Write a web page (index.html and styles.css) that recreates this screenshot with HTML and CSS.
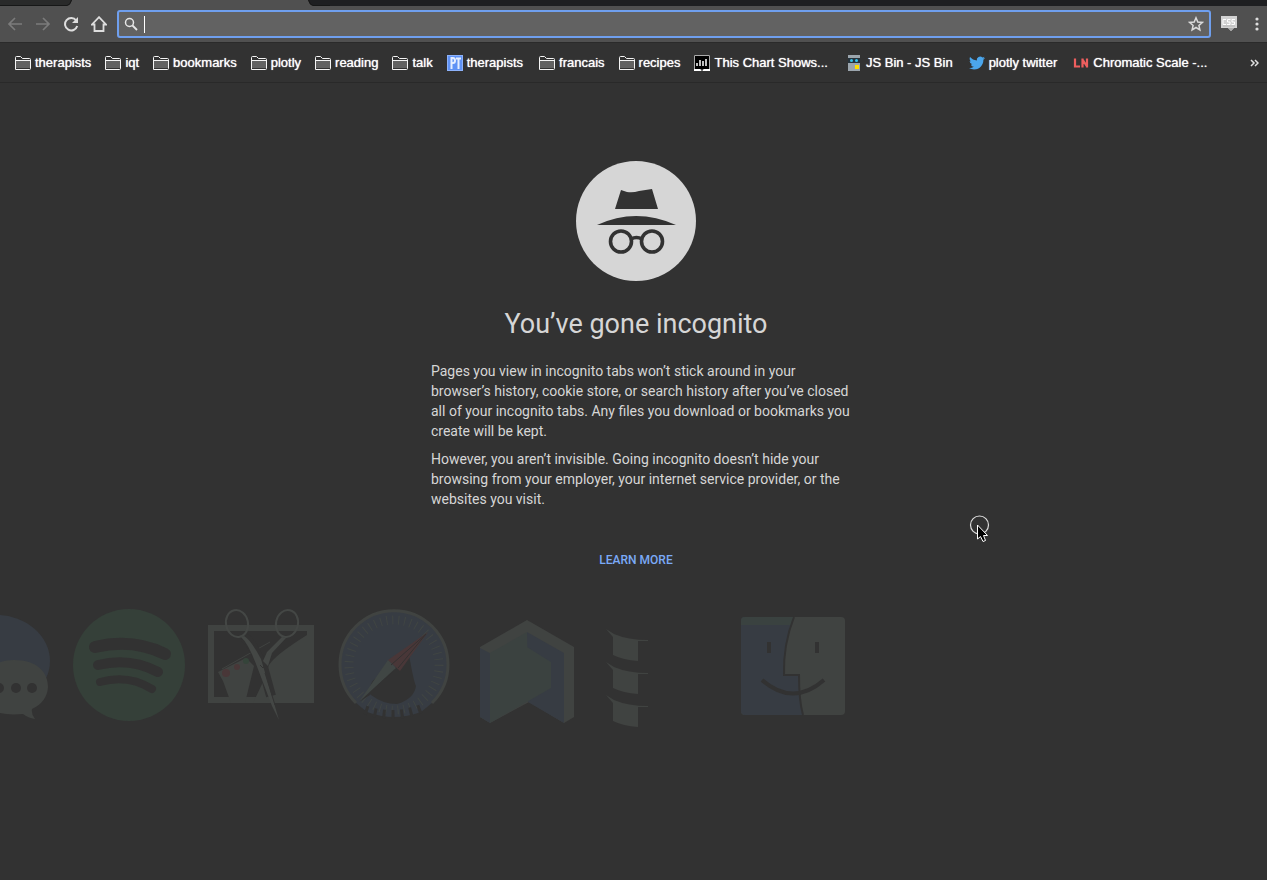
FILE: index.html
```html
<!DOCTYPE html>
<html lang="en">
<head>
<meta charset="utf-8">
<title>New Incognito Tab</title>
<link rel="stylesheet" href="styles.css">
</head>
<body>
<svg class="defs" width="0" height="0" aria-hidden="true">
  <symbol id="folder" viewBox="0 0 16 14"><path d="M.5 13.500V1.500Q.5.500 1.500.500H5.500L7.500 2.500H14.500Q15.500 2.500 15.500 3.500V12.500Q15.500 13.500 14.500 13.500Z" fill="#323232" stroke="#f4f4f4"/><path d="M1 5H15V12H1Z" fill="#626262"/><path d="M1 4.500H15.500" stroke="#f4f4f4"/></symbol>
</svg>

<div class="tabstrip">
  <svg width="330" height="6" viewBox="0 0 330 6" aria-hidden="true">
    <path d="M0 0H72L70 4Q69 5 67 5H0Z" fill="#292a2a"/>
    <path d="M0 5.500H67Q70 5.500 72 0H308Q310 5.500 313 5.500V6H0Z" fill="#505050"/>
    <path d="M0 5.500H67Q70 5.500 71.500 0M308.500 0Q310 5.500 313 5.500H330" fill="none" stroke="#161717"/>
  </svg>
</div>

<header class="toolbar">
  <button class="tool" type="button" aria-label="Back" disabled><svg width="16" height="16" viewBox="0 0 16 16"><path d="M15 8H2M8 2L2 8L8 14" fill="none" stroke="#7b7b7b" stroke-width="1.700"/></svg></button>
  <button class="tool" type="button" aria-label="Forward" disabled><svg width="16" height="16" viewBox="0 0 16 16"><path d="M1 8H14M8 2L14 8L8 14" fill="none" stroke="#7b7b7b" stroke-width="1.700"/></svg></button>
  <button class="tool" type="button" aria-label="Reload"><svg width="16" height="16" viewBox="0 0 16 16"><path d="M13.200 4.500A6.200 6.200 0 1 0 14.200 10" fill="none" stroke="#dedede" stroke-width="2"/><path d="M15 1V7H9Z" fill="#dedede"/></svg></button>
  <button class="tool" type="button" aria-label="Home"><svg width="16" height="16" viewBox="0 0 16 16"><path d="M8 1.200L15 8.500H12.500V15H3.500V8.500H1Z" fill="none" stroke="#dedede" stroke-width="1.800"/></svg></button>
  <div class="omnibox">
    <svg width="14" height="14" viewBox="0 0 14 14" aria-hidden="true"><circle cx="5.500" cy="5.500" r="4" fill="none" stroke="#e6e6e6" stroke-width="1.500"/><path d="M8.500 8.500L13 13" stroke="#e6e6e6" stroke-width="1.800"/></svg>
    <span class="caret"></span>
    <input class="address" type="text" aria-label="Search or enter address">
    <button class="star" type="button" aria-label="Bookmark this page"><svg width="16" height="16" viewBox="0 0 16 16"><path d="M8 1.800L9.800 6L14.300 6.400L10.900 9.400L11.900 13.900L8 11.500L4.100 13.900L5.100 9.400L1.700 6.400L6.200 6Z" fill="none" stroke="#dadada" stroke-width="1.500"/></svg></button>
  </div>
  <button class="ext" type="button" aria-label="CSS extension"><svg width="16" height="16" viewBox="0 0 16 16"><path d="M0 0H16V12H13L10 15L7 12H0Z" fill="#d2d2d2"/><path d="M7 12L10 15L13 12Z" fill="#ababab"/><path d="M5 3.500H2V8.500H5M9.500 3.500H6.500V6H9V8.500H6M14 3.500H11V6H13.500V8.500H10.500" fill="none" stroke="#fff"/><path d="M2 10H14" stroke="#b4b4b4"/></svg></button>
  <button class="menu" type="button" aria-label="Menu"><svg width="4" height="14" viewBox="0 0 4 14"><circle cx="2" cy="2" r="1.600" fill="#dedede"/><circle cx="2" cy="7" r="1.600" fill="#dedede"/><circle cx="2" cy="12" r="1.600" fill="#dedede"/></svg></button>
</header>

<nav class="bookmarks" aria-label="Bookmarks">
  <a class="bm" href="#"><svg class="fold"><use href="#folder"/></svg>therapists</a>
  <a class="bm" href="#"><svg class="fold"><use href="#folder"/></svg>iqt</a>
  <a class="bm" href="#"><svg class="fold"><use href="#folder"/></svg>bookmarks</a>
  <a class="bm" href="#"><svg class="fold"><use href="#folder"/></svg>plotly</a>
  <a class="bm" href="#"><svg class="fold"><use href="#folder"/></svg>reading</a>
  <a class="bm" href="#"><svg class="fold"><use href="#folder"/></svg>talk</a>
  <a class="bm site" href="#"><svg width="16" height="16" viewBox="0 0 16 16"><rect width="16" height="16" fill="#5f92f5"/><rect x=".5" y=".5" width="15" height="15" fill="none" stroke="#8db2fa"/><path d="M4.500 14V3H6Q8 3 8 5.500T6 8H5M9 3.500H14M11.500 3V14" fill="none" stroke="#e4edff" stroke-width="2"/></svg>therapists</a>
  <a class="bm" href="#"><svg class="fold"><use href="#folder"/></svg>francais</a>
  <a class="bm" href="#"><svg class="fold"><use href="#folder"/></svg>recipes</a>
  <a class="bm wide" href="#"><svg width="16" height="16" viewBox="0 0 16 16"><rect width="16" height="16" fill="#000"/><path d="M.5 14V.500H15.500V14" fill="none" stroke="#aaa"/><path d="M3 11V8M6 11V5M9 11V6M12 11V4" stroke="#fff" stroke-width="1.500"/><path d="M0 14H6L8 15L10 14H16V16H9L8 15L7 16H0Z" fill="#fff"/></svg>This Chart Shows...</a>
  <a class="bm site" href="#"><svg width="16" height="16" viewBox="0 0 16 16"><rect x="2" width="12" height="16" fill="#9ba5ad"/><rect x="2" y="3" width="12" height="5" fill="#26333c"/><circle cx="5.500" cy="5.500" r="1.500" fill="#35c4f0"/><circle cx="10.500" cy="5.500" r="1.500" fill="#35c4f0"/><rect x="9" y="10" width="4" height="4" fill="#ffe000"/></svg>JS Bin - JS Bin</a>
  <a class="bm site" href="#"><svg width="16" height="16" viewBox="0 0 24 24"><path fill="#4ba6ec" d="M23.950 4.570a10 10 0 0 1-2.820.78 4.960 4.960 0 0 0 2.160-2.720c-.95.55-2 .95-3.120 1.180a4.920 4.920 0 0 0-8.380 4.480C7.690 8.100 4.070 6.130 1.640 3.160a4.820 4.820 0 0 0-.67 2.480c0 1.710.87 3.210 2.190 4.100a4.900 4.900 0 0 1-2.230-.62v.06a4.920 4.920 0 0 0 3.950 4.830 5 5 0 0 1-2.210.08 4.940 4.940 0 0 0 4.600 3.420A9.870 9.870 0 0 1 0 19.540a14 14 0 0 0 7.550 2.210c9.050 0 14-7.500 14-13.980 0-.21 0-.42-.02-.63a9.940 9.940 0 0 0 2.460-2.550z"/></svg>plotly twitter</a>
  <a class="bm" href="#"><svg width="16" height="16" viewBox="0 0 16 16"><path d="M2 3.500V11.500H7M9.500 12.500V3.500M14 12.500V3.500M9.500 4.500L14 11.500" fill="none" stroke="#ee5e5e" stroke-width="2.200"/></svg>Chromatic Scale -...</a>
  <button class="more" type="button" aria-label="More bookmarks"><svg width="10" height="8" viewBox="0 0 10 8"><path d="M2 1L5 4L2 7M6 1L9 4L6 7" fill="none" stroke="#e0e0e0" stroke-width="1.500"/></svg></button>
</nav>

<main class="page">
  <svg class="logo" width="120" height="120" viewBox="0 0 120 120" role="img" aria-label="Incognito">
    <circle cx="60" cy="60" r="60" fill="#d6d6d6"/>
    <path d="M45 29L51 31Q57 32 63 30L76 28L82 48H39ZM21 64Q60 46 100 64Z" fill="#323232"/>
    <g fill="none" stroke="#323232" stroke-width="3.600"><circle cx="45" cy="80.500" r="10.500"/><circle cx="76" cy="80.500" r="10.500"/><path d="M55 78Q60.500 75 66 78"/></g>
  </svg>
  <h1 class="title">You’ve gone incognito</h1>
  <div class="copy">
    <p>Pages you view in incognito tabs won’t stick around in your browser’s history, cookie store, or search history after you’ve closed all of your incognito tabs. Any files you download or bookmarks you create will be kept.</p>
    <p>However, you aren’t invisible. Going incognito doesn’t hide your browsing from your employer, your internet service provider, or the websites you visit.</p>
  </div>
  <a class="learn" href="#">LEARN MORE</a>
</main>

<div class="dock" aria-hidden="true">
  <svg width="60" height="130" viewBox="0 0 60 130"><ellipse cx="-4" cy="61" rx="54" ry="46" fill="#373c43"/><path d="M14 60C38 60 48 73 48 87Q47 102 32 109Q31 114 35 119Q28 118 23 114Q-20 118-20 87C-20 70-4 60 14 60Z" fill="#404341"/><g fill="#323232"><circle cx="-1" cy="88" r="5"/><circle cx="16" cy="88" r="5"/><circle cx="32" cy="88" r="5"/></g></svg>
  <svg width="135" height="130" viewBox="60 0 135 130"><circle cx="129" cy="65" r="56" fill="#354039"/><g fill="none" stroke="#323232" stroke-linecap="round"><path d="M95 47Q133 38 165 54" stroke-width="12"/><path d="M98 65Q130 57 158 72" stroke-width="10"/><path d="M100 82Q128 74 152 89" stroke-width="8"/></g></svg>
  <svg width="130" height="130" viewBox="0 0 130 130"><path d="M13 25H119V103H13ZM19 31V97H112V31Z" fill="#404341" fill-rule="evenodd"/><path d="M23 72L51 58L59 66L50 103H36L28 81ZM112 35V97H101V103H58L67 84L74 65Q80 55 112 35Z" fill="#404341"/><path d="M27 69L75 42" stroke="#404341"/><circle cx="31" cy="73" r="4" fill="#493738"/><circle cx="42" cy="67" r="3" fill="#493738"/><circle cx="51" cy="61" r="3" fill="#35443a"/><path d="M48 37Q56 40 68 67L76 96" fill="none" stroke="#323232" stroke-width="10"/><g fill="none" stroke="#444745" stroke-width="2"><ellipse cx="42" cy="23.500" rx="11" ry="13.500" transform="rotate(-12 42 23.500)"/><ellipse cx="92" cy="23.500" rx="11" ry="13.500" transform="rotate(12 92 23.500)"/></g><path d="M49 36Q56 40 66 59L84 120L77 106L61 64Q53 43 46 37Z" fill="#444745"/><path d="M87 37L72 52L68 61L73 66L77 53L91 38Z" fill="#444745"/><path d="M65 65L68 68L70 65M70 73L80 105" fill="none" stroke="#323232"/></svg>
  <svg width="140" height="130" viewBox="0 0 140 130"><path d="M31 103A54 54 0 1 1 107 103L96 112Q69 122 42 112Z" fill="#373c43"/><path d="M31 103A54 54 0 1 1 107 103" fill="none" stroke="#404341" stroke-width="3"/><circle cx="69" cy="65" r="45" fill="none" stroke="#404543" stroke-width="9" stroke-dasharray="1 5"/><path d="M65 71L84 55Q89 83 91 86Q89 99 72 104Q58 104 46 95Q42 81 56 75Z" fill="#323232"/><path d="M40 110Q69 120 98 108" fill="none" stroke="#323232" stroke-width="9" stroke-dasharray="3 6"/><path d="M63 60L34 102L71 68Z" fill="#404644"/><path d="M71 68L34 102L45 95Z" fill="#323232"/><path d="M63 60L103 32L75 71Z" fill="#493738"/><path d="M66 65L101 34L73 68" fill="none" stroke="#343131"/></svg>
  <svg width="125" height="130" viewBox="0 0 125 130"><path d="M15 47L62 20L109 47V117L99 123L64 102L25 123L15 117Z" fill="#404341"/><path d="M15 48L25 53V123L15 117ZM62 32L99 53V123L63 102Z" fill="#373c43"/><path d="M25 53L62 32V47L86 62V88L25 123Z" fill="#3b4240"/></svg>
  <svg width="140" height="130" viewBox="0 0 140 130"><path id="fold-band" d="M16 29L24 34Q38 40 58 40V41H48V61Q33 60 23 55V37Z" fill="#404341"/><use href="#fold-band" y="33"/><use href="#fold-band" y="66"/></svg>
  <svg width="125" height="130" viewBox="0 0 125 130"><rect x="11" y="17" width="104" height="98" rx="4" fill="#404341"/><path d="M64 17H15Q11 17 11 21V111Q11 115 15 115H73Q69 101 69 75H54Q53 45 64 17Z" fill="#373c43"/><path d="M64 17H15Q11 17 11 21V25H61Z" fill="#3a4240"/><path d="M64 17Q53 45 54 75H69Q69 101 73 115" fill="none" stroke="#323232" stroke-width="2"/><path d="M39 42V53M87 42V53" stroke="#323232" stroke-width="4"/><path d="M32 80Q63 107 94 80" fill="none" stroke="#323232" stroke-width="4"/></svg>
</div>

<svg class="cursor" width="24" height="30" viewBox="0 0 24 30" aria-hidden="true"><circle cx="11.500" cy="11" r="9" fill="none" stroke="#dcdcdc" stroke-width="1.200"/><path d="M9.500 11V25L12.500 22.500L15 27.500L17.500 26.500L15.500 21.500H19.500Z" fill="#000" stroke="#fff"/></svg>
</body>
</html>
```
FILE: styles.css
```css
* { box-sizing: border-box; }

body {
  margin: 0;
  min-height: 100vh;
  overflow-x: hidden;
  background: #323232;
  color: #d6d6d6;
  font-family: Roboto, sans-serif;
  font-size: 14px;
}

svg { display: block; flex: none; }
.defs { position: absolute; }

button {
  display: flex;
  align-items: center;
  justify-content: center;
  padding: 0;
  border: 0;
  background: none;
}

.tabstrip { height: 6px; background: #1e1f21; }

.toolbar {
  display: flex;
  align-items: center;
  height: 37px;
  padding: 0 8px 0 1px;
  background: #505050;
  border-bottom: 1px solid #2a2a2a;
}

.tool { width: 28px; height: 28px; }

.omnibox {
  display: flex;
  flex: 1;
  align-items: center;
  height: 28px;
  margin-left: 4px;
  padding: 0 5px;
  border: 2px solid #6f9fee;
  border-radius: 3px;
  background: #626262;
}

.caret { width: 1px; height: 17px; margin-left: 6px; background: #fff; }

.address {
  flex: 1;
  min-width: 0;
  border: 0;
  outline: 0;
  background: transparent;
  color: #fff;
  font: 14px Roboto, sans-serif;
}

.ext { margin-left: 10px; }
.menu { margin-left: 18px; }

.bookmarks {
  display: flex;
  align-items: center;
  gap: 14px;
  height: 40px;
  padding: 0 8px 0 15px;
  border-bottom: 1px solid #292929;
}

.bm {
  display: flex;
  align-items: center;
  gap: 4px;
  color: #fff;
  font: 13px/16px "Liberation Sans", Arial, sans-serif;
  text-decoration: none;
  text-shadow: 0 0 1px #fff;
  white-space: nowrap;
}

.fold { width: 16px; height: 14px; }
.site { padding-right: 2px; }
.wide { padding-right: 4px; }
.more { margin-left: auto; }

.page {
  display: flex;
  flex-direction: column;
  align-items: center;
  padding: 78px 0 0 5px;
}

.title {
  margin: 24px 0 0;
  font-size: 27px;
  font-weight: 400;
  line-height: 38px;
}

.copy { max-width: 424px; margin: 18px 0 0 14px; line-height: 20px; }
.copy p { margin: 0 0 8px; }

.learn {
  margin-top: 33px;
  color: #7baaf7;
  font-size: 12px;
  font-weight: 500;
  line-height: 20px;
  text-decoration: none;
}

.dock { display: flex; margin-top: 30px; }

.cursor { position: absolute; left: 968px; top: 514px; }
```
